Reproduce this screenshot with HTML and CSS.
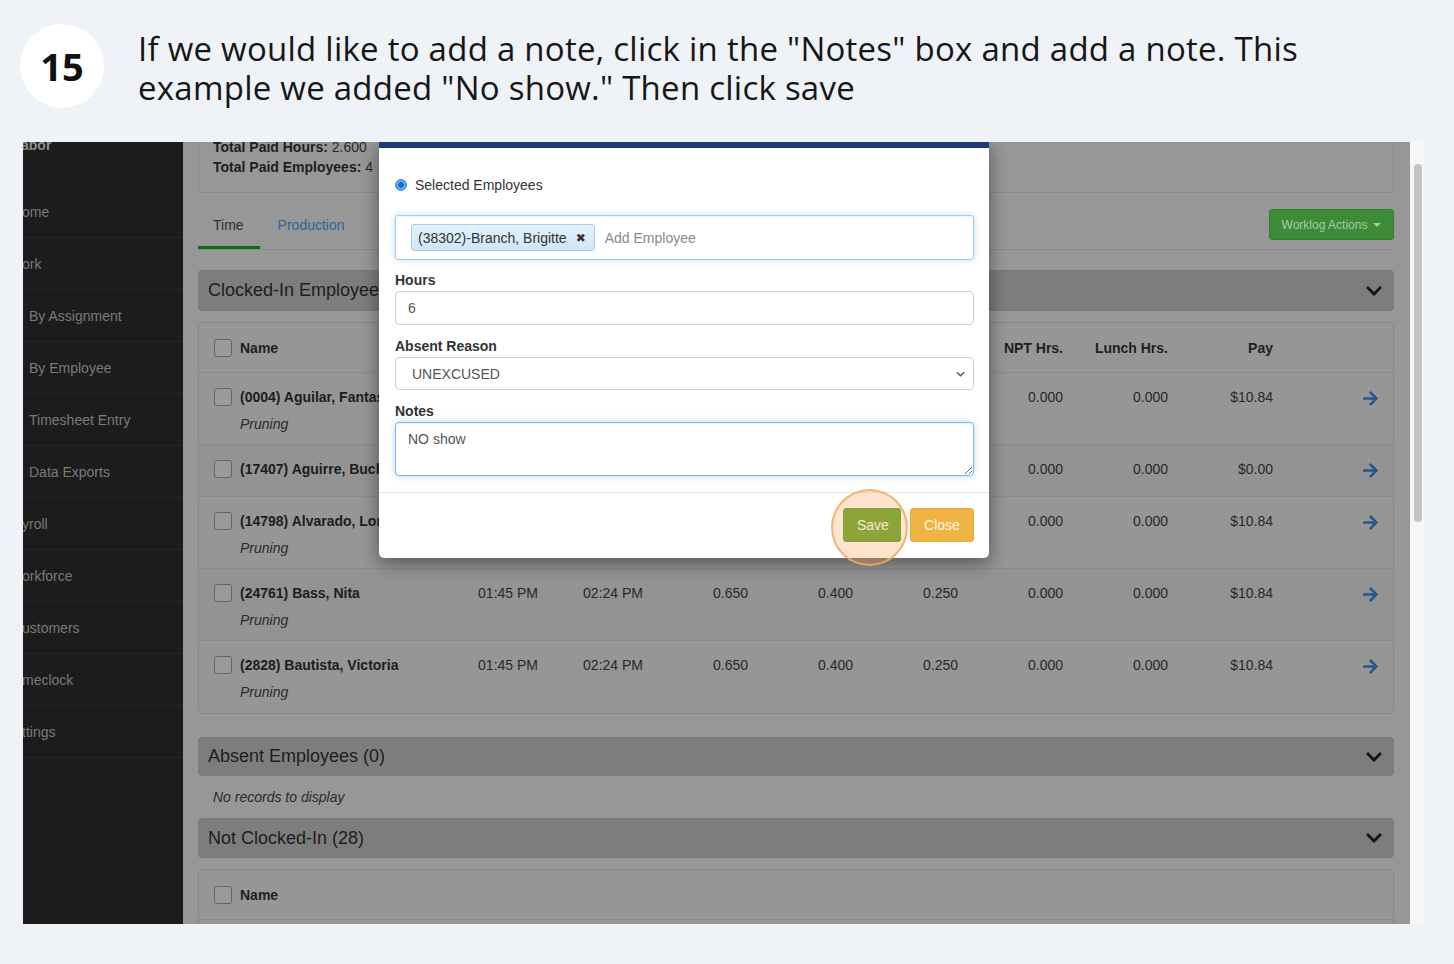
FILE: index.html
```html
<!DOCTYPE html>
<html lang="en">
<head>
  <meta charset="UTF-8">
  <meta name="viewport" content="width=device-width, initial-scale=1.0">
  <link rel="stylesheet" href="styles.css">
</head>
<body>
  <div class="step">
    <div class="step-num">15</div>
    <p class="step-text">If we would like to add a note, click in the "Notes" box and add a note. This<br>example we added "No show." Then click save</p>
  </div>

  <div class="shot">
    <nav class="sidebar">
      <div class="nav-brand">abor</div>
      <div class="nav-item clipped">ome</div>
      <div class="nav-item clipped">ork</div>
      <div class="nav-item sub">By Assignment</div>
      <div class="nav-item sub">By Employee</div>
      <div class="nav-item sub">Timesheet Entry</div>
      <div class="nav-item sub">Data Exports</div>
      <div class="nav-item clipped">yroll</div>
      <div class="nav-item clipped">orkforce</div>
      <div class="nav-item clipped">ustomers</div>
      <div class="nav-item clipped">meclock</div>
      <div class="nav-item clipped">ttings</div>
    </nav>

    <main class="content">
      <div class="summary">
        <div><b>Total Paid Hours:</b> 2.600</div>
        <div><b>Total Paid Employees:</b> 4</div>
      </div>

      <div class="tabs">
        <a class="tab active">Time</a>
        <a class="tab link">Production</a>
        <button class="worklog-btn">Worklog Actions <span class="caret"></span></button>
      </div>

      <div class="panel-head">
        <span>Clocked-In Employees (5)</span>
        <svg class="chev" viewBox="0 0 448 512"><path d="M207.029 381.476L12.686 187.132c-9.373-9.373-9.373-24.569 0-33.941l22.667-22.667c9.357-9.357 24.522-9.375 33.901-.04L224 284.505l154.745-154.021c9.379-9.335 24.544-9.317 33.901.04l22.667 22.667c9.373 9.373 9.373 24.569 0 33.941L240.971 381.476c-9.373 9.372-24.569 9.372-33.942 0z"/></svg>
      </div>

      <div class="table">
        <div class="row head">
          <div class="name-cell"><span class="check"></span>Name</div>
          <div class="num">In</div>
          <div class="num">Out</div>
          <div class="num">Total Hrs.</div>
          <div class="num">Work Hrs.</div>
          <div class="num">Break Hrs.</div>
          <div class="num">NPT Hrs.</div>
          <div class="num">Lunch Hrs.</div>
          <div class="num">Pay</div>
          <div></div>
        </div>

        <div class="row">
          <div class="name-cell"><span class="check"></span><div><b>(0004) Aguilar, Fantasia</b><div class="task">Pruning</div></div></div>
          <div class="num">01:45 PM</div>
          <div class="num">02:24 PM</div>
          <div class="num">0.650</div>
          <div class="num">0.400</div>
          <div class="num">0.250</div>
          <div class="num">0.000</div>
          <div class="num">0.000</div>
          <div class="num">$10.84</div>
          <div class="go"><svg viewBox="0 0 448 512"><path d="M190.5 66.9l22.2-22.2c9.4-9.4 24.6-9.4 33.9 0L441 239c9.4 9.4 9.4 24.6 0 33.9L246.6 467.3c-9.4 9.4-24.6 9.4-33.9 0l-22.2-22.2c-9.5-9.5-9.3-25 .4-34.3L311.4 296H24c-13.3 0-24-10.7-24-24v-32c0-13.3 10.7-24 24-24h287.4L190.9 101.2c-9.8-9.3-10-24.8-.4-34.3z"/></svg></div>
        </div>

        <div class="row single">
          <div class="name-cell"><span class="check"></span><div><b>(17407) Aguirre, Buckley</b></div></div>
          <div class="num">01:45 PM</div>
          <div class="num">01:45 PM</div>
          <div class="num">0.000</div>
          <div class="num">0.000</div>
          <div class="num">0.000</div>
          <div class="num">0.000</div>
          <div class="num">0.000</div>
          <div class="num">$0.00</div>
          <div class="go"><svg viewBox="0 0 448 512"><path d="M190.5 66.9l22.2-22.2c9.4-9.4 24.6-9.4 33.9 0L441 239c9.4 9.4 9.4 24.6 0 33.9L246.6 467.3c-9.4 9.4-24.6 9.4-33.9 0l-22.2-22.2c-9.5-9.5-9.3-25 .4-34.3L311.4 296H24c-13.3 0-24-10.7-24-24v-32c0-13.3 10.7-24 24-24h287.4L190.9 101.2c-9.8-9.3-10-24.8-.4-34.3z"/></svg></div>
        </div>

        <div class="row">
          <div class="name-cell"><span class="check"></span><div><b>(14798) Alvarado, Lorena</b><div class="task">Pruning</div></div></div>
          <div class="num">01:45 PM</div>
          <div class="num">02:24 PM</div>
          <div class="num">0.650</div>
          <div class="num">0.400</div>
          <div class="num">0.250</div>
          <div class="num">0.000</div>
          <div class="num">0.000</div>
          <div class="num">$10.84</div>
          <div class="go"><svg viewBox="0 0 448 512"><path d="M190.5 66.9l22.2-22.2c9.4-9.4 24.6-9.4 33.9 0L441 239c9.4 9.4 9.4 24.6 0 33.9L246.6 467.3c-9.4 9.4-24.6 9.4-33.9 0l-22.2-22.2c-9.5-9.5-9.3-25 .4-34.3L311.4 296H24c-13.3 0-24-10.7-24-24v-32c0-13.3 10.7-24 24-24h287.4L190.9 101.2c-9.8-9.3-10-24.8-.4-34.3z"/></svg></div>
        </div>

        <div class="row">
          <div class="name-cell"><span class="check"></span><div><b>(24761) Bass, Nita</b><div class="task">Pruning</div></div></div>
          <div class="num">01:45 PM</div>
          <div class="num">02:24 PM</div>
          <div class="num">0.650</div>
          <div class="num">0.400</div>
          <div class="num">0.250</div>
          <div class="num">0.000</div>
          <div class="num">0.000</div>
          <div class="num">$10.84</div>
          <div class="go"><svg viewBox="0 0 448 512"><path d="M190.5 66.9l22.2-22.2c9.4-9.4 24.6-9.4 33.9 0L441 239c9.4 9.4 9.4 24.6 0 33.9L246.6 467.3c-9.4 9.4-24.6 9.4-33.9 0l-22.2-22.2c-9.5-9.5-9.3-25 .4-34.3L311.4 296H24c-13.3 0-24-10.7-24-24v-32c0-13.3 10.7-24 24-24h287.4L190.9 101.2c-9.8-9.3-10-24.8-.4-34.3z"/></svg></div>
        </div>

        <div class="row">
          <div class="name-cell"><span class="check"></span><div><b>(2828) Bautista, Victoria</b><div class="task">Pruning</div></div></div>
          <div class="num">01:45 PM</div>
          <div class="num">02:24 PM</div>
          <div class="num">0.650</div>
          <div class="num">0.400</div>
          <div class="num">0.250</div>
          <div class="num">0.000</div>
          <div class="num">0.000</div>
          <div class="num">$10.84</div>
          <div class="go"><svg viewBox="0 0 448 512"><path d="M190.5 66.9l22.2-22.2c9.4-9.4 24.6-9.4 33.9 0L441 239c9.4 9.4 9.4 24.6 0 33.9L246.6 467.3c-9.4 9.4-24.6 9.4-33.9 0l-22.2-22.2c-9.5-9.5-9.3-25 .4-34.3L311.4 296H24c-13.3 0-24-10.7-24-24v-32c0-13.3 10.7-24 24-24h287.4L190.9 101.2c-9.8-9.3-10-24.8-.4-34.3z"/></svg></div>
        </div>
      </div>

      <div class="panel-head absent">
        <span>Absent Employees (0)</span>
        <svg class="chev" viewBox="0 0 448 512"><path d="M207.029 381.476L12.686 187.132c-9.373-9.373-9.373-24.569 0-33.941l22.667-22.667c9.357-9.357 24.522-9.375 33.901-.04L224 284.505l154.745-154.021c9.379-9.335 24.544-9.317 33.901.04l22.667 22.667c9.373 9.373 9.373 24.569 0 33.941L240.971 381.476c-9.373 9.372-24.569 9.372-33.942 0z"/></svg>
      </div>
      <div class="empty">No records to display</div>

      <div class="panel-head">
        <span>Not Clocked-In (28)</span>
        <svg class="chev" viewBox="0 0 448 512"><path d="M207.029 381.476L12.686 187.132c-9.373-9.373-9.373-24.569 0-33.941l22.667-22.667c9.357-9.357 24.522-9.375 33.901-.04L224 284.505l154.745-154.021c9.379-9.335 24.544-9.317 33.901.04l22.667 22.667c9.373 9.373 9.373 24.569 0 33.941L240.971 381.476c-9.373 9.372-24.569 9.372-33.942 0z"/></svg>
      </div>
      <div class="table">
        <div class="row head short">
          <div class="name-cell"><span class="check"></span>Name</div>
        </div>
        <div class="row"></div>
      </div>
    </main>

    <div class="scrollbar"><div class="thumb"></div></div>

    <!-- modal over the dimmed page -->
    <div class="modal">
      <div class="m-head"></div>
      <div class="m-body">
        <label class="radio-row"><span class="radio"></span>Selected Employees</label>

        <div class="tag-input">
          <span class="chip">(38302)-Branch, Brigitte <span class="chip-x">✖</span></span>
          <span class="placeholder">Add Employee</span>
        </div>

        <div class="field-label">Hours</div>
        <input class="field" type="text" value="6">

        <div class="field-label">Absent Reason</div>
        <div class="field select">
          <span>UNEXCUSED</span>
          <svg class="sel-chev" viewBox="0 0 10 6"><polyline points="1,1 5,5 9,1"/></svg>
        </div>

        <div class="field-label">Notes</div>
        <textarea class="field notes">NO show</textarea>
      </div>
      <div class="m-foot">
        <button class="btn save">Save</button>
        <button class="btn close">Close</button>
      </div>
    </div>

    <div class="spot"></div>
  </div>
</body>
</html>
```

FILE: styles.css
```css
* {
  box-sizing: border-box;
}

body {
  margin: 0;
  width: 1454px;
  height: 964px;
  overflow: hidden;
  background: #eff3f8;
  font-family: "Liberation Sans", Arial, sans-serif;
}

/* step header */
.step {
  display: flex;
  align-items: flex-start;
  gap: 34px;
  height: 142px;
  padding: 24px 0 0 20px;
}

.step-num {
  flex: none;
  width: 84px;
  height: 84px;
  border-radius: 50%;
  background: #fff;
  display: flex;
  align-items: center;
  justify-content: center;
  font-family: "Open Sans", "Noto Sans", sans-serif;
  font-weight: 700;
  font-size: 38px;
  color: #111;
}

.step-text {
  margin: 5px 0 0;
  font-family: "Open Sans", "Noto Sans", sans-serif;
  font-size: 33px;
  letter-spacing: 0.25px;
  line-height: 39px;
  color: #161616;
  white-space: nowrap;
}

/* screenshot frame */
.shot {
  position: relative;
  display: flex;
  margin-left: 23px;
  width: 1401px;
  height: 782px;
  overflow: hidden;
  font-size: 14px;
}

.sidebar {
  flex: none;
  width: 160px;
  background: #1c1c1c;
  color: #7a7a7a;
}

.nav-brand {
  margin-top: -5px;
  height: 49px;
  line-height: 16px;
  font-weight: 700;
  color: #8e8e8e;
  text-indent: -2px;
}

.nav-item {
  height: 52px;
  line-height: 52px;
  border-bottom: 1px solid #262626;
  white-space: nowrap;
}

.nav-item.clipped {
  text-indent: -1px;
}

.nav-item.sub {
  padding-left: 6px;
}

.content {
  flex: 1;
  background: #979797;
  padding: 0 16px 0 15px;
  color: #222;
}

.scrollbar {
  flex: none;
  width: 14px;
  background: #f6f6f6;
  padding: 22px 0 0 4px;
}

.thumb {
  width: 8px;
  height: 358px;
  border-radius: 4px;
  background: #c3c3c3;
}

/* summary card */
.summary {
  margin-top: -12px;
  padding: 6px 14px 15px;
  border: 1px solid #898989;
  border-radius: 4px;
  font-size: 14px;
  line-height: 20px;
  color: #2a2a2a;
}

.summary b {
  color: #1e1e1e;
}

/* tabs */
.tabs {
  display: flex;
  align-items: flex-start;
  margin-top: 10px;
  border-bottom: 1px solid #8b8b8b;
}

.tab {
  padding: 12px 15px 11px;
  line-height: 20px;
  color: #2f2f2f;
  border-bottom: 3px solid transparent;
}

.tab.active {
  padding-right: 16px;
  border-bottom-color: #0d6a10;
}

.tab.link {
  margin-left: 3px;
  color: #33659b;
}

.worklog-btn {
  margin: 6px 0 0 auto;
  height: 31px;
  width: 125px;
  padding: 0;
  border: 1px solid #367f31;
  border-radius: 3px;
  background: #3c8b36;
  color: #a9caa5;
  font-family: inherit;
  font-size: 12px;
  display: flex;
  align-items: center;
  justify-content: center;
  gap: 6px;
}

.caret {
  width: 0;
  height: 0;
  border-left: 4px solid transparent;
  border-right: 4px solid transparent;
  border-top: 4px solid #a9caa5;
}

/* collapsible panel headers */
.panel-head {
  display: flex;
  align-items: center;
  justify-content: space-between;
  margin-top: 11px;
  height: 40px;
  padding: 0 11px 0 9px;
  background: #7d7d7d;
  border: 1px solid #7a7a7a;
  border-radius: 4px;
  font-size: 18px;
  color: #1d1d1d;
}

.tabs + .panel-head {
  margin-top: 20px;
  height: 41px;
}

.panel-head.absent {
  margin-top: 23px;
  height: 39px;
}

.chev {
  width: 16px;
  height: 18px;
  fill: #151515;
}

.empty {
  padding: 11px 0 0 15px;
  line-height: 20px;
  font-style: italic;
  color: #2a2a2a;
}

/* tables */
.table {
  margin-top: 11px;
  border: 1px solid #878787;
  border-radius: 4px;
  background: #969696;
}

.row {
  display: grid;
  grid-template-columns: 219px repeat(8, 105px) 1fr;
  align-items: start;
  padding: 14px 15px 10px;
  border-top: 1px solid #8b8b8b;
  line-height: 20px;
  color: #282828;
}

.row:nth-child(odd) {
  background: #939393;
}

.row:last-child {
  padding-bottom: 11px;
}

.row.head {
  border-top: none;
  height: 49px;
  padding: 0 15px;
  align-items: center;
  font-weight: 700;
  background: #969696;
  color: #1f1f1f;
}

.row.single {
  padding-bottom: 17px;
}

.name-cell {
  display: flex;
  align-items: flex-start;
  gap: 8px;
  white-space: nowrap;
}

.row.head .name-cell {
  align-items: center;
}

.name-cell b {
  color: #1d1d1d;
}

.task {
  margin-top: 7px;
  font-style: italic;
  color: #2a2a2a;
}

.check {
  flex: none;
  width: 18px;
  height: 18px;
  margin-top: 1px;
  border: 1px solid #646464;
  border-radius: 3px;
  background: #9b9b9b;
}

.row.head .check {
  margin-top: 0;
}

.num {
  text-align: right;
}

.go {
  display: flex;
  justify-content: flex-end;
  padding-top: 3px;
}

.go svg {
  width: 15px;
  height: 17px;
  fill: #22588c;
}

/* modal */
.modal {
  position: absolute;
  left: 356px;
  top: 0;
  width: 610px;
  background: #fff;
  border-radius: 0 0 5px 5px;
  box-shadow: 0 5px 18px rgba(0, 0, 0, 0.45);
  color: #333;
}

.m-head {
  height: 6px;
  background: #1f3a78;
}

.m-body {
  padding: 27px 15px 16px 16px;
}

.radio-row {
  display: flex;
  align-items: center;
  gap: 8px;
  height: 20px;
}

.radio {
  width: 12px;
  height: 12px;
  border-radius: 50%;
  background: radial-gradient(circle, #1f69c9 0 2.5px, #5ea6f3 3px);
  border: 1px solid #3c87db;
}

.tag-input {
  display: flex;
  align-items: center;
  gap: 10px;
  margin-top: 20px;
  height: 45px;
  padding-left: 15px;
  border: 1px solid #a9cbea;
  border-radius: 3px;
  box-shadow: inset 0 1px 1px rgba(0, 0, 0, 0.06), 0 0 6px rgba(102, 175, 233, 0.45);
}

.chip {
  display: flex;
  align-items: center;
  height: 27px;
  padding: 0 8px 0 6px;
  border: 1px solid #a8cde9;
  border-radius: 3px;
  background: linear-gradient(#e3f2fd, #cfe6f7);
  color: #333;
  white-space: nowrap;
}

.chip-x {
  margin-left: 9px;
  font-family: "DejaVu Sans", sans-serif;
  font-size: 12px;
  color: #333;
}

.placeholder {
  color: #8a8a8a;
}

.field-label {
  margin: 12px 0 3px;
  line-height: 16px;
  font-weight: 700;
  color: #333;
}

.field-label ~ .field-label {
  margin-top: 13px;
}

.field {
  display: block;
  width: 100%;
  height: 34px;
  padding: 0 12px;
  border: 1px solid #cfcfcf;
  border-radius: 4px;
  font-family: inherit;
  font-size: 14px;
  color: #555;
  background: #fff;
}

.select {
  display: flex;
  align-items: center;
  justify-content: space-between;
  height: 33px;
  padding: 0 8px 0 16px;
}

.sel-chev {
  width: 9px;
  height: 6px;
  fill: none;
  stroke: #555;
  stroke-width: 1.6;
}

.notes {
  height: 54px;
  padding: 8px 12px;
  line-height: 17px;
  resize: vertical;
  border-color: #86b4e0;
  box-shadow: inset 0 1px 1px rgba(0, 0, 0, 0.06), 0 0 6px rgba(102, 175, 233, 0.5);
  outline: none;
}

.m-foot {
  display: flex;
  justify-content: flex-end;
  gap: 9px;
  padding: 15px 15px 16px;
  border-top: 1px solid #e6e6e6;
}

.btn {
  height: 34px;
  padding: 0 13px;
  border: 1px solid transparent;
  border-radius: 3px;
  font-family: inherit;
  font-size: 14px;
  color: #fff;
}

.btn.save {
  width: 58px;
  background: #5fa52f;
  border-color: #579a2a;
}

.btn.close {
  width: 64px;
  background: #f0b443;
  border-color: #eaac37;
  color: #fdf5e6;
}

/* click highlight */
.spot {
  position: absolute;
  left: 808px;
  top: 347px;
  width: 77px;
  height: 77px;
  border-radius: 50%;
  border: 2px solid rgba(242, 168, 96, 0.85);
  background: rgba(246, 166, 90, 0.3);
}
```
